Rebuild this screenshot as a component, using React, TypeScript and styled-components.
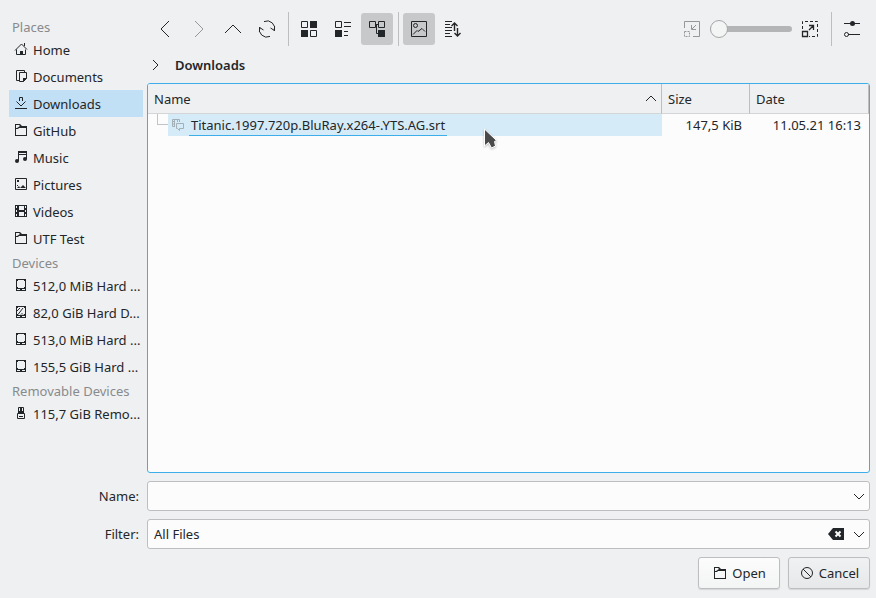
import React from "react";
import styled, { createGlobalStyle, css } from "styled-components";

const ink = "#232629";
const line = "#bcbebf";
const accent = "#3daee9";
const paper = "#fcfcfc";

const GlobalStyle = createGlobalStyle`
  * { box-sizing: border-box; }
  body {
    margin: 0;
    background: #eff0f1;
    color: ${ink};
    font: 13px/18px "Noto Sans", sans-serif;
  }
  button, input, select { font: inherit; color: inherit; }
`;

const Dialog = styled.div`
  display: grid;
  grid-template-columns: 143px minmax(0, 1fr);
  grid-template-rows: minmax(0, 1fr) auto;
  column-gap: 4px;
  row-gap: 8px;
  min-height: 100vh;
  padding: 13px 6px 9px 0;
`;

const Sidebar = styled.nav`
  padding: 3px 0 0 9px;
`;

const SectionTitle = styled.h2`
  margin: 0;
  padding: 2px 0 0 3px;
  height: 20px;
  color: #888b8d;
  font-size: 13px;
  font-weight: 400;
  line-height: 18px;
`;

const PlaceList = styled.ul`
  list-style: none;
  margin: 0;
  padding: 0;
`;

const Place = styled.a<{ $active?: boolean }>`
  display: flex;
  align-items: center;
  gap: 4px;
  height: 27px;
  padding: 0 0 1px 4px;
  color: inherit;
  text-decoration: none;
  white-space: nowrap;
  background: ${(p) => (p.$active ? "#c2e0f5" : "transparent")};

  svg { flex: none; }
  span { padding-top: 2px; }
`;

const Main = styled.main`
  display: flex;
  flex-direction: column;
  min-width: 0;
`;

const Toolbar = styled.div`
  display: flex;
  align-items: center;
  gap: 2px;
  padding: 0 2px;
  height: 32px;
`;

const ToolButton = styled.button<{ $pressed?: boolean }>`
  display: grid;
  place-items: center;
  width: 32px;
  height: 32px;
  padding: 0;
  border: 0;
  border-radius: 3px;
  background: ${(p) => (p.$pressed ? "#c7c8ca" : "transparent")};
`;

const Separator = styled.span`
  width: 1px;
  height: 34px;
  margin: 0 2px 0 3px;
  background: ${line};
  flex: none;
`;

const ZoomGroup = styled.div`
  display: flex;
  align-items: center;
  gap: 7px;
  margin: 0 5px 0 auto;
`;

const Slider = styled.input`
  appearance: none;
  width: 82px;
  height: 20px;
  margin: 0;
  background: transparent;

  &::-webkit-slider-runnable-track {
    height: 6px;
    border-radius: 3px;
    background: #b4b5b7;
  }
  &::-webkit-slider-thumb {
    appearance: none;
    width: 18px;
    height: 18px;
    margin-top: -6px;
    border: 1px solid #a5a7a8;
    border-radius: 50%;
    background: #f3f4f4;
  }
`;

const Breadcrumb = styled.div`
  display: flex;
  align-items: center;
  gap: 15px;
  height: 38px;
  padding: 2px 0 0 5px;
  font-weight: 600;

  a { color: inherit; text-decoration: none; }
`;

const FilePane = styled.div`
  flex: 1;
  border: 1px solid ${accent};
  border-radius: 3px;
  background: ${paper};
  overflow: hidden;
  position: relative;
`;

const FileTable = styled.table`
  width: 100%;
  table-layout: fixed;
  border-collapse: separate;
  border-spacing: 0;
`;

const HeadCell = styled.th<{ $width?: number }>`
  width: ${(p) => (p.$width ? `${p.$width}px` : "auto")};
  height: 30px;
  padding: 0 6px;
  text-align: left;
  font-weight: 400;
  background: #eff0f1;
  border-right: 1px solid ${line};
  border-bottom: 1px solid #d3d5d6;

  div { display: flex; align-items: center; justify-content: space-between; }
  svg { margin-right: -2px; }
`;

const Cell = styled.td`
  height: 22px;
  padding: 0 8px 0 0;
  text-align: right;
  line-height: 22px;
`;

const NameCell = styled.td`
  padding: 0;
`;

const TreeItem = styled.div`
  display: flex;
  height: 22px;
`;

const Branch = styled.span`
  width: 11px;
  height: 11px;
  margin-left: 9px;
  border: solid #c3c4c5;
  border-width: 0 0 1px 1px;
  flex: none;
`;

const FileLabel = styled.a`
  display: flex;
  flex: 1;
  gap: 3px;
  padding-left: 2px;
  background: #d6ebf8;
  color: inherit;
  text-decoration: none;

  svg { margin-top: 3px; }
  span {
    height: 22px;
    padding: 0 2px;
    line-height: 22px;
    border-bottom: 1px solid ${accent};
  }
`;

const Pointer = styled.svg`
  position: absolute;
  left: 335px;
  top: 43px;
  filter: drop-shadow(0 1px 1px #00000040);
`;

const Form = styled.form`
  grid-column: 1 / -1;
  display: grid;
  grid-template-columns: 139px minmax(0, 1fr);
  gap: 8px;
  align-items: center;
`;

const Label = styled.label`
  text-align: right;
`;

const Combo = styled.div`
  position: relative;
  display: flex;
`;

const fieldStyle = css`
  appearance: none;
  width: 100%;
  height: 30px;
  margin: 0;
  padding: 0 60px 0 6px;
  border: 1px solid ${line};
  border-radius: 3px;
  background: ${paper};
  outline: none;
`;

const TextField = styled.input`${fieldStyle}`;
const SelectField = styled.select`${fieldStyle}`;

const Adornments = styled.div`
  position: absolute;
  top: 7px;
  right: 3px;
  display: flex;
  gap: 7px;
  pointer-events: none;
`;

const InlineButton = styled.button`
  display: grid;
  padding: 0;
  border: 0;
  background: none;
  pointer-events: auto;
`;

const Actions = styled.div`
  grid-column: 1 / -1;
  display: flex;
  justify-content: flex-end;
  gap: 8px;
`;

const PushButton = styled.button<{ $muted?: boolean }>`
  display: flex;
  align-items: center;
  justify-content: center;
  gap: 4px;
  width: 82px;
  height: 32px;
  padding: 0;
  border: 1px solid ${line};
  border-radius: 3px;
  box-shadow: 0 1px 1px #d4d5d6;
  background: ${(p) => (p.$muted ? "linear-gradient(#f0f1f2, #e7e8ea)" : "linear-gradient(#fcfcfc, #f3f4f4)")};
`;

type GlyphProps = { size?: number; color?: string; children: React.ReactNode };

const Glyph = ({ size = 16, color = ink, children }: GlyphProps) => (
  <svg width={size} height={size} viewBox={`0 0 ${size} ${size}`} fill="none" stroke={color} aria-hidden="true">
    {children}
  </svg>
);

const HomeIcon = () => (
  <Glyph>
    <path d="M2 9.5 8.5 3 14 8.5M3.5 8.5v5H7M10 13.5h2.5v-5M11.5 2v3" />
    <path d="M7 10h3v4H7z" fill={ink} stroke="none" />
  </Glyph>
);
const DocumentsIcon = () => (
  <Glyph>
    <path d="M6 12.5H3.5v-10h8V4M6.5 4.5h7v6l-3 3h-4z" />
    <path d="M10 14v-4h4z" fill={ink} stroke="none" />
  </Glyph>
);
const DownloadsIcon = () => (
  <Glyph>
    <path d="M2 13.5h12M6.5 6V2.5h3V6M3.5 6.5 8 11l4.5-4.5" />
  </Glyph>
);
const FolderIcon = () => (
  <Glyph>
    <path d="M2 2h5l2 2h5v10H2zM3 3v3h1l3-2L6 3zM3 7v6h10V6H6L5 7z" fill={ink} fillRule="evenodd" stroke="none" />
  </Glyph>
);
const MusicIcon = () => (
  <Glyph>
    <path d="M5.5 12V2.5h8V10M6 5.5h7" />
    <path d="M5 2h9v2H5z" fill={ink} stroke="none" />
    <circle cx="4" cy="12" r="2" fill={ink} stroke="none" />
    <circle cx="12" cy="10" r="2" fill={ink} stroke="none" />
  </Glyph>
);
const PicturesIcon = () => (
  <Glyph>
    <path d="M2.5 2.5h11v11h-11z" />
    <path d="M4 4h2v2H4zM4 12l2-2 1 2zM7 12l3-3 3 3zM4 9h1v1H4z" fill={ink} stroke="none" />
  </Glyph>
);
const VideosIcon = () => (
  <Glyph>
    <path d="M2 2h12v12H2zM6 3v4h5V3zM6 9v4h5V9zM3 3v2h1V3zM3 7v2h1V7zM3 11v2h1v-2zM12 3v2h1V3zM12 7v2h1V7zM12 11v2h1v-2z" fill={ink} fillRule="evenodd" stroke="none" />
  </Glyph>
);
const DriveIcon = ({ root }: { root?: boolean }) => (
  <Glyph>
    <path d="M3 2h10v12H3zM4 3v8h8V3zM4 12v1h3v-1zM9 12v1h3v-1z" fill={ink} fillRule="evenodd" stroke="none" />
    <path d="M4 3h1v1H4zM11 3h1v1h-1zM4 10h1v1H4zM11 10h1v1h-1z" fill={ink} stroke="none" />
    {root && <path d="M5 10.5 10 4M4 7l3-3M8 10.5l1-1 1 1" />}
  </Glyph>
);
const UsbIcon = () => (
  <Glyph>
    <path d="M5.5 8V2.5h5V8M4.5 8.5h7v5h-7zM6 11.5h4" />
    <path d="M5 6h6v2H5zM7 3h2v4H7z" fill={ink} stroke="none" />
  </Glyph>
);

const Chevron = ({ dir, color }: { dir: "left" | "right" | "up"; color?: string }) => (
  <Glyph size={22} color={color}>
    <path d={{ left: "M15 3 7 11l8 8", right: "M7 3l8 8-8 8", up: "M3 15l8-8 8 8" }[dir]} />
  </Glyph>
);
const ReloadIcon = () => (
  <Glyph size={22}>
    <path d="M8 3.6A7.5 7.5 0 0 1 18.2 13M14 18.4A7.5 7.5 0 0 1 3.8 9M3.5 14V9.5l4 2.5M18.5 8v4.5l-4-2.5" />
  </Glyph>
);
const IconsViewIcon = () => (
  <Glyph size={22}>
    <path d="M3.5 3.5h6v6h-6zM12.5 12.5h6v6h-6z" />
    <path d="M12 3h7v7h-7zM3 12h7v7H3z" fill={ink} stroke="none" />
  </Glyph>
);
const CompactViewIcon = () => (
  <Glyph size={22}>
    <path d="M3.5 3.5h6v6h-6zM12 4.5h7M12 8.5h7M12 13.5h4M12 17.5h4" />
    <path d="M3 12h7v7H3z" fill={ink} stroke="none" />
  </Glyph>
);
const TreeViewIcon = () => (
  <Glyph size={22}>
    <path d="M3.5 3.5h6v6h-6zM12.5 3.5h6v6h-6zM9 6.5h4M10.5 6v9.5H13" />
    <path d="M12 12h7v7h-7z" fill={ink} stroke="none" />
  </Glyph>
);
const PreviewIcon = () => (
  <Glyph size={22}>
    <path d="M3.5 3.5h15v15h-15zM5 16.5l4-4 1 1 4-3 1 1 2 2" />
    <circle cx="7.5" cy="7.5" r="2" />
  </Glyph>
);
const SortIcon = () => (
  <Glyph size={22}>
    <path d="M3 3.5h7M3 6.5h5M3 9.5h7M3 12.5h7M3 15.5h5M3 18.5h7" />
    <path d="M12.5 13V5M9.5 8l3-3 3 3M15.5 10v8M12.5 15l3 3 3-3" strokeWidth="1.4" />
  </Glyph>
);
const ShrinkIcon = () => (
  <Glyph size={22} color="#95989a">
    <path d="M3.5 10V3.5h15v15H12M15 7l-4 4M10.5 7v4.5H15" />
    <path d="M3.5 13.5h5v5h-5z" strokeDasharray="2 1" />
  </Glyph>
);
const GrowIcon = () => (
  <Glyph size={22}>
    <path d="M3.5 13.5h5v5h-5zM10 12l4-4M10 7.5h4.5V12" strokeWidth="1.3" />
    <path d="M3.5 11V3.5h15v15H10" strokeDasharray="3 2" />
  </Glyph>
);
const SettingsIcon = () => (
  <Glyph size={22}>
    <path d="M3 5.5h16M7 16.5h12" />
    <circle cx="11.5" cy="5.5" r="2.5" fill={ink} stroke="none" />
    <circle cx="5.5" cy="16.5" r="2" />
  </Glyph>
);
const DownArrow = () => (
  <Glyph><path d="M3 6l5 5 5-5" /></Glyph>
);
const ClearIcon = () => (
  <Glyph>
    <path d="M0 8l5-6h11v12H5z" fill={ink} stroke="none" />
    <path d="M7.5 5.5l5 5M12.5 5.5l-5 5" stroke={paper} strokeWidth="2" />
  </Glyph>
);
const CancelIcon = () => (
  <Glyph>
    <circle cx="8" cy="8" r="5.5" />
    <path d="M4 4l8 8" />
  </Glyph>
);
const SubtitleIcon = () => (
  <Glyph color="#a3b0b8">
    <path d="M5 9.5H2.5v-7h7V5M4.5 2v8M7.5 2v3M2 4.5h3M2 7h3M6.5 6.5h7v5h-4v2l-2-2h-1z" />
  </Glyph>
);

const places = [
  { name: "Home", icon: <HomeIcon /> },
  { name: "Documents", icon: <DocumentsIcon /> },
  { name: "Downloads", icon: <DownloadsIcon />, active: true },
  { name: "GitHub", icon: <FolderIcon /> },
  { name: "Music", icon: <MusicIcon /> },
  { name: "Pictures", icon: <PicturesIcon /> },
  { name: "Videos", icon: <VideosIcon /> },
  { name: "UTF Test", icon: <FolderIcon /> },
];
const devices = [
  { name: "512,0 MiB Hard ...", icon: <DriveIcon /> },
  { name: "82,0 GiB Hard D...", icon: <DriveIcon root /> },
  { name: "513,0 MiB Hard ...", icon: <DriveIcon /> },
  { name: "155,5 GiB Hard ...", icon: <DriveIcon /> },
];
const removable = [{ name: "115,7 GiB Remo...", icon: <UsbIcon /> }];

type PlaceEntry = { name: string; icon: React.ReactNode; active?: boolean };

const Section = ({ title, items }: { title: string; items: PlaceEntry[] }) => (
  <section>
    <SectionTitle>{title}</SectionTitle>
    <PlaceList>
      {items.map((item) => (
        <li key={item.name}>
          <Place href="#" $active={item.active}>
            {item.icon}
            <span>{item.name}</span>
          </Place>
        </li>
      ))}
    </PlaceList>
  </section>
);

export default function App() {
  return (
    <>
      <GlobalStyle />
      <Dialog>
        <Sidebar>
          <Section title="Places" items={places} />
          <Section title="Devices" items={devices} />
          <Section title="Removable Devices" items={removable} />
        </Sidebar>
        <Main>
          <Toolbar>
            <ToolButton aria-label="Back"><Chevron dir="left" /></ToolButton>
            <ToolButton aria-label="Forward"><Chevron dir="right" color="#95989a" /></ToolButton>
            <ToolButton aria-label="Parent folder"><Chevron dir="up" /></ToolButton>
            <ToolButton aria-label="Reload"><ReloadIcon /></ToolButton>
            <Separator />
            <ToolButton aria-label="Icons view"><IconsViewIcon /></ToolButton>
            <ToolButton aria-label="Compact view"><CompactViewIcon /></ToolButton>
            <ToolButton aria-label="Tree view" aria-pressed="true" $pressed><TreeViewIcon /></ToolButton>
            <Separator />
            <ToolButton aria-label="Show preview" aria-pressed="true" $pressed><PreviewIcon /></ToolButton>
            <ToolButton aria-label="Sorting"><SortIcon /></ToolButton>
            <ZoomGroup>
              <ShrinkIcon />
              <Slider type="range" min={0} max={100} defaultValue={0} aria-label="Icon size" />
              <GrowIcon />
            </ZoomGroup>
            <Separator />
            <ToolButton aria-label="Options"><SettingsIcon /></ToolButton>
          </Toolbar>
          <Breadcrumb>
            <svg width="8" height="12" viewBox="0 0 8 12" fill="none" stroke={ink} aria-hidden="true">
              <path d="M1 1l5 5-5 5" />
            </svg>
            <a href="#">Downloads</a>
          </Breadcrumb>
          <FilePane>
            <FileTable>
              <thead>
                <tr>
                  <HeadCell>
                    <div>
                      Name
                      <svg width="12" height="8" viewBox="0 0 12 8" fill="none" stroke={ink} aria-hidden="true">
                        <path d="M1 6l5-5 5 5" />
                      </svg>
                    </div>
                  </HeadCell>
                  <HeadCell $width={88}>Size</HeadCell>
                  <HeadCell $width={119}>Date</HeadCell>
                </tr>
              </thead>
              <tbody>
                <tr>
                  <NameCell>
                    <TreeItem>
                      <Branch />
                      <FileLabel href="#">
                        <SubtitleIcon />
                        <span>Titanic.1997.720p.BluRay.x264-.YTS.AG.srt</span>
                      </FileLabel>
                    </TreeItem>
                  </NameCell>
                  <Cell>147,5 KiB</Cell>
                  <Cell>11.05.21 16:13</Cell>
                </tr>
              </tbody>
            </FileTable>
            <Pointer width="16" height="24" viewBox="0 0 16 24" aria-hidden="true">
              <path d="M1.5 2v17l4-3.5 3 5.5 4-2-1-4.5 2-1z" fill="#4a4a4a" stroke="#fff" />
            </Pointer>
          </FilePane>
        </Main>
        <Form onSubmit={(e) => e.preventDefault()}>
          <Label htmlFor="file-name">Name:</Label>
          <Combo>
            <TextField id="file-name" type="text" />
            <Adornments>
              <InlineButton type="button" aria-label="Recent names"><DownArrow /></InlineButton>
            </Adornments>
          </Combo>
          <Label htmlFor="file-filter">Filter:</Label>
          <Combo>
            <SelectField id="file-filter"><option>All Files</option></SelectField>
            <Adornments>
              <InlineButton type="button" aria-label="Clear filter"><ClearIcon /></InlineButton>
              <DownArrow />
            </Adornments>
          </Combo>
          <Actions>
            <PushButton type="submit"><FolderIcon />Open</PushButton>
            <PushButton type="button" $muted><CancelIcon />Cancel</PushButton>
          </Actions>
        </Form>
      </Dialog>
    </>
  );
}
